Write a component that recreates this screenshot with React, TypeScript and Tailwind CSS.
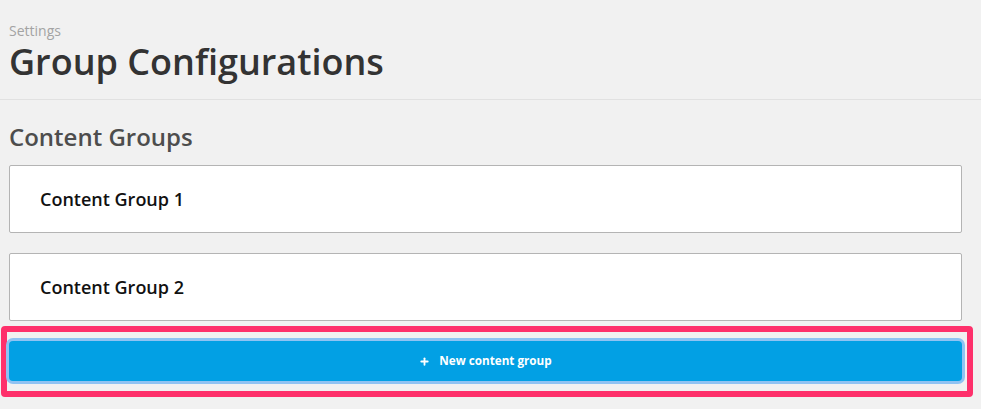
import { Plus } from "lucide-react";

const groups = ["Content Group 1", "Content Group 2"];

const App = () => {
  return (
    <div className="min-h-[409px] w-full bg-[#f1f1f1] font-['Open_Sans',sans-serif] overflow-hidden">
      <header className="border-b border-[#e1e1e1] pl-[9px] pt-[22px] pb-[15px]">
        <div className="text-[14px] leading-[18px] text-[#a3a3a3]">Settings</div>
        <h1 className="text-[36px] leading-[44px] font-semibold text-[#333333]">
          Group Configurations
        </h1>
      </header>

      <section className="pl-[9px] pr-[19px]">
        <h2 className="mt-[21px] text-[24px] leading-[32px] font-semibold text-[#4d4d4d]">
          Content Groups
        </h2>

        <div className="mt-[12px] flex flex-col gap-[20px]">
          {groups.map((g) => (
            <div
              key={g}
              className="flex h-[68px] items-center rounded-[2px] border border-[#b4b4b4] bg-white pl-[30px]"
            >
              <span className="text-[18px] font-semibold text-[#111111]">{g}</span>
            </div>
          ))}
        </div>

        <div className="-ml-[8px] mt-[5px] w-[972px] rounded-[4px] border-[6px] border-[#fe306b] pt-[9px] pb-[10px] pl-[2px] pr-[5px]">
          <button className="flex h-[40px] w-full items-center justify-center gap-[9px] rounded-[4px] bg-[#02a0e4] text-[11.7px] font-bold text-white shadow-[0_0_0_3px_#8fc3f3]">
            <Plus size={11} strokeWidth={4} />
            New content group
          </button>
        </div>
      </section>
    </div>
  );
};

export default App;
